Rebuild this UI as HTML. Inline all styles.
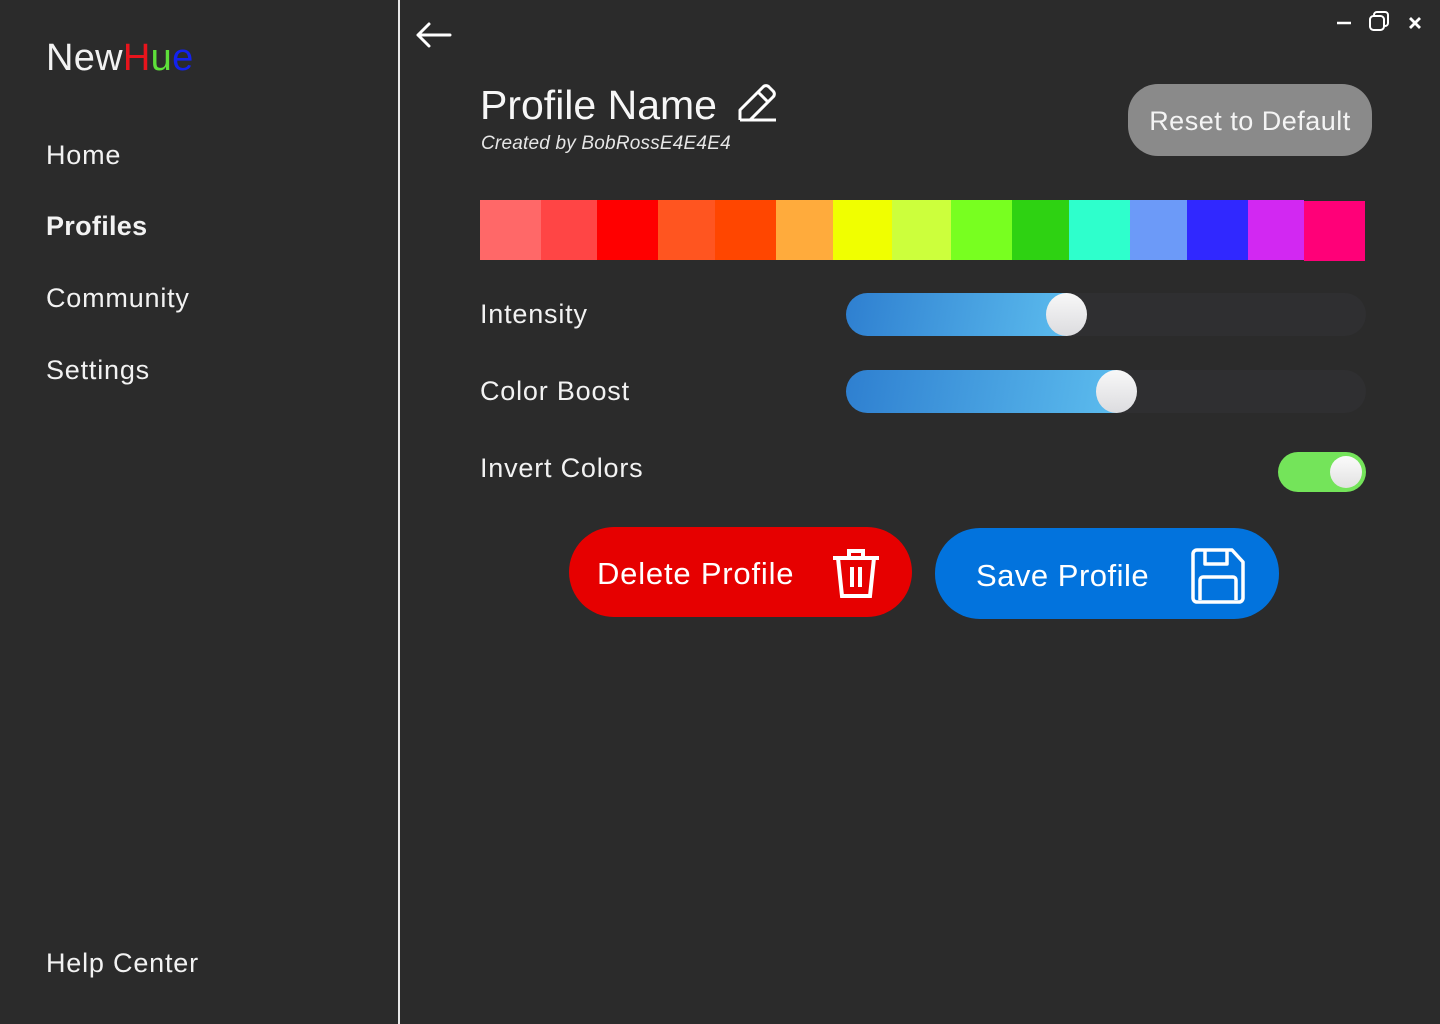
<!DOCTYPE html>
<html><head><meta charset="utf-8"><style>
*{margin:0;padding:0;box-sizing:border-box}
body{width:1440px;height:1024px;background:#2b2b2b;font-family:"Liberation Sans",sans-serif;color:#fff;position:relative;overflow:hidden}
.a{position:absolute}
.nav{left:46px;font-size:27px;color:#f2f2f2;letter-spacing:0.8px}
.sw{position:absolute;top:200px;height:60px}
.track{position:absolute;left:846px;width:520px;height:43px;border-radius:22px;background:#2f2f31}
.fill{position:absolute;left:0;top:0;height:43px;border-radius:22px;background:linear-gradient(100deg,#2e7fd0,#5fc0f0)}
.knob{position:absolute;top:0;width:41px;height:43px;border-radius:50%;background:linear-gradient(#f8f8f8,#dcdcdf)}
.lbl{left:480px;font-size:27px;color:#f2f2f2;letter-spacing:0.8px}
</style></head><body>
<div class="a" style="left:398px;top:0;width:2px;height:1024px;background:#e8e8e8"></div>
<div class="a" style="left:46px;top:37px;font-size:38px;color:#f2f2f2;letter-spacing:0.3px">New<span style="color:#e8141c">H</span><span style="color:#5ee03a">u</span><span style="color:#1322ee">e</span></div>
<div class="a nav" style="top:140px">Home</div>
<div class="a nav" style="top:211px;font-weight:bold;letter-spacing:0.3px">Profiles</div>
<div class="a nav" style="top:283px">Community</div>
<div class="a nav" style="top:355px">Settings</div>
<div class="a nav" style="top:948px">Help Center</div>
<svg class="a" style="left:414px;top:20px" width="40" height="30" viewBox="0 0 40 30"><path d="M36 15H4M15 4L4 15L15 26" fill="none" stroke="#fff" stroke-width="3" stroke-linecap="round" stroke-linejoin="round"/></svg>
<svg class="a" style="left:1330px;top:10px" width="100" height="30" viewBox="0 0 100 30"><path d="M7 13h14" stroke="#fff" stroke-width="2.5"/><rect x="40" y="6" width="14" height="14" rx="3.5" fill="none" stroke="#fff" stroke-width="2"/><path d="M44 6V5a3 3 0 0 1 3-3h8a3 3 0 0 1 3 3v8a3 3 0 0 1-3 3h-1" fill="none" stroke="#fff" stroke-width="2"/><path d="M80 8l10 10M90 8l-10 10" stroke="#fff" stroke-width="2.8"/></svg>
<div class="a" style="left:480px;top:82px;font-size:41px;color:#f6f6f6">Profile Name</div>
<svg class="a" style="left:736px;top:82px" width="44" height="42" viewBox="0 0 44 42"><path d="M4 38h36M4 38V28L27 5a4 4 0 0 1 6 0l4 4a4 4 0 0 1 0 6L14 38H4M22 10l10 10" fill="none" stroke="#fff" stroke-width="3" stroke-linejoin="round"/></svg>
<div class="a" style="left:481px;top:133px;font-size:19px;font-style:italic;color:#e6e6e6;letter-spacing:0.2px">Created by BobRossE4E4E4</div>
<div class="a" style="left:1128px;top:84px;width:244px;height:72px;border-radius:30px;background:#8a8a8a;font-size:27px;color:#f4f4f4;text-align:center;line-height:74px;letter-spacing:0.5px">Reset to Default</div>
<div class="sw" style="left:480px;width:61px;background:#ff6868"></div>
<div class="sw" style="left:541px;width:56px;background:#ff4545"></div>
<div class="sw" style="left:597px;width:61px;background:#ff0000"></div>
<div class="sw" style="left:658px;width:57px;background:#ff5520"></div>
<div class="sw" style="left:715px;width:61px;background:#ff4600"></div>
<div class="sw" style="left:776px;width:57px;background:#ffab3c"></div>
<div class="sw" style="left:833px;width:59px;background:#f0ff00"></div>
<div class="sw" style="left:892px;width:59px;background:#ccff3c"></div>
<div class="sw" style="left:951px;width:61px;background:#78ff20"></div>
<div class="sw" style="left:1012px;width:57px;background:#2ed212"></div>
<div class="sw" style="left:1069px;width:61px;background:#2effcc"></div>
<div class="sw" style="left:1130px;width:57px;background:#6c9af8"></div>
<div class="sw" style="left:1187px;width:61px;background:#3028ff"></div>
<div class="sw" style="left:1248px;width:56px;background:#d228f2"></div>
<div class="sw" style="left:1304px;width:61px;top:201px;background:#ff0078"></div>
<div class="a lbl" style="top:299px">Intensity</div>
<div class="track" style="top:293px"><div class="fill" style="width:240px"></div><div class="knob" style="left:200px"></div></div>
<div class="a lbl" style="top:376px">Color Boost</div>
<div class="track" style="top:370px"><div class="fill" style="width:290px"></div><div class="knob" style="left:250px"></div></div>
<div class="a lbl" style="top:453px">Invert Colors</div>
<div class="a" style="left:1278px;top:452px;width:88px;height:40px;border-radius:20px;background:#74e45a"></div>
<div class="a" style="left:1330px;top:456px;width:32px;height:32px;border-radius:50%;background:linear-gradient(#fbfbfb,#e2e2e2)"></div>
<div class="a" style="left:569px;top:527px;width:343px;height:90px;border-radius:45px;background:#e60000"></div>
<div class="a" style="left:597px;top:556px;font-size:31px;letter-spacing:0.8px">Delete Profile</div>
<svg class="a" style="left:830px;top:547px" width="52" height="54" viewBox="0 0 52 54"><path d="M3 11h46M19 11V4h14v7M8 11l4 38h28l4-38M22 20v20M30 20v20" fill="none" stroke="#fff" stroke-width="4"/></svg>
<div class="a" style="left:935px;top:528px;width:344px;height:91px;border-radius:45px;background:#0273dd"></div>
<div class="a" style="left:976px;top:558px;font-size:31px;letter-spacing:0.5px">Save Profile</div>
<svg class="a" style="left:1191px;top:548px" width="54" height="56" viewBox="0 0 54 56"><path d="M6 2h35l11 12v36a4 4 0 0 1-4 4H6a4 4 0 0 1-4-4V6a4 4 0 0 1 4-4zM14 2v14h22V2M9 52V32a3 3 0 0 1 3-3h30a3 3 0 0 1 3 3v20" fill="none" stroke="#fff" stroke-width="3.5" stroke-linejoin="round"/></svg>
</body></html>
